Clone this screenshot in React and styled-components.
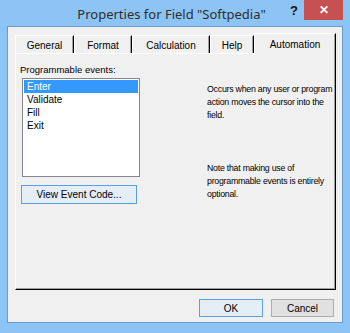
import React from "react";
import styled, { createGlobalStyle } from "styled-components";

const Global = createGlobalStyle`
  html, body { margin: 0; padding: 0; background: #8ec5f6; }
  body { font-family: "Liberation Sans", Arial, sans-serif; }
`;

const Window = styled.div`
  width: 350px;
  height: 333px;
  background: #8dc4f6;
  display: flex;
  flex-direction: column;
  box-sizing: border-box;
`;

const TitleBar = styled.div`
  height: 26px;
  flex: none;
  display: grid;
  grid-template-columns: 1fr auto 1fr;
  align-items: start;
  padding-right: 7px;
`;

const Title = styled.div`
  grid-column: 2;
  font-family: "Noto Sans", "Open Sans", sans-serif;
  font-size: 13px;
  color: #2e2e2e;
  line-height: 28px;
  white-space: nowrap;
`;

const Caption = styled.div`
  grid-column: 3;
  justify-self: end;
  display: flex;
  align-items: flex-start;
`;

const CapButton = styled.div`
  width: ${p => p.$w}px;
  height: 20px;
  display: flex;
  align-items: center;
  justify-content: center;
  background: ${p => (p.$close ? "#c75050" : "transparent")};
  color: ${p => (p.$close ? "#fff" : "#111")};
  font-family: "Liberation Sans", Arial, sans-serif;
  font-weight: bold;
  font-size: ${p => (p.$close ? "12px" : "13px")};
`;

const Client = styled.div`
  flex: 1;
  margin: 0 7px 10px 7px;
  background: #f0f0f0;
  border: 1px solid #6b9cc9;
  padding: 6px 6px 0 7px;
  display: flex;
  flex-direction: column;
  font-size: 9.5px;
  color: #000;
`;

const TabRow = styled.div`
  display: flex;
  align-items: flex-end;
  height: 20px;
  position: relative;
  z-index: 1;
`;

const Tab = styled.div`
  box-sizing: border-box;
  width: ${p => p.$w}px;
  height: ${p => (p.$active ? 21 : 18)}px;
  margin-bottom: ${p => (p.$active ? -1 : 0)}px;
  background: #f0f0f0;
  border-top: 1px solid #fff;
  border-left: 1px solid #fff;
  border-right: 1px solid #000;
  box-shadow: inset -1px 0 0 #a0a0a0;
  display: flex;
  align-items: center;
  justify-content: center;
  font-size: 10px;
  padding-top: ${p => (p.$active ? 0 : 1)}px;
`;

const Panel = styled.div`
  box-sizing: border-box;
  width: 321px;
  height: 237px;
  border-top: 1px solid #fff;
  border-left: 1px solid #fff;
  border-right: 1px solid #000;
  border-bottom: 1px solid #000;
  box-shadow: inset -1px -1px 0 #a0a0a0;
  padding: 9px 4px 0 4px;
  display: flex;
  align-items: flex-start;
`;

const LeftCol = styled.div`
  flex: none;
  width: 187px;
  display: flex;
  flex-direction: column;
  align-items: flex-start;
`;

const Label = styled.div`
  height: 12px;
  line-height: 12px;
  margin-top: 1px;
  white-space: nowrap;
`;

const ListBox = styled.div`
  box-sizing: border-box;
  width: 118px;
  height: 99px;
  margin: 2px 0 0 2px;
  background: #fff;
  border: 1px solid #828790;
  padding: 1px;
`;

const Item = styled.div`
  height: 13px;
  line-height: 13px;
  padding-left: 3px;
  font-size: 10px;
  background: ${p => (p.$sel ? "#3399ff" : "transparent")};
  color: ${p => (p.$sel ? "#fff" : "#000")};
`;

const Button = styled.div`
  box-sizing: border-box;
  width: ${p => p.$w}px;
  height: ${p => p.$h}px;
  margin-left: ${p => p.$ml || 0}px;
  margin-top: ${p => p.$mt || 0}px;
  border: 1px solid ${p => (p.$focus ? "#57a0e6" : "#adadad")};
  background: ${p => (p.$focus ? "#e5eef7" : "#e1e1e1")};
  display: flex;
  align-items: center;
  justify-content: center;
  font-size: 10px;
  color: #000;
`;

const RightCol = styled.div`
  flex: 1;
  min-width: 0;
  display: flex;
  flex-direction: column;
`;

const Para = styled.div`
  line-height: 13px;
  font-size: 8.8px;
  letter-spacing: -0.25px;
  white-space: nowrap;
  margin-top: ${p => p.$mt}px;
`;

const ButtonRow = styled.div`
  display: flex;
  justify-content: flex-end;
  gap: 8px;
  padding-right: 2px;
  margin-top: 9px;
`;

export default function App() {
  return (
    <>
      <Global />
      <Window>
        <TitleBar>
          <Title>Properties for Field "Softpedia"</Title>
          <Caption>
            <CapButton $w={20}>?</CapButton>
            <CapButton $w={39} $close>✕</CapButton>
          </Caption>
        </TitleBar>
        <Client>
          <TabRow>
            <Tab $w={59}>General</Tab>
            <Tab $w={58}>Format</Tab>
            <Tab $w={78}>Calculation</Tab>
            <Tab $w={44}>Help</Tab>
            <Tab $w={82} $active>Automation</Tab>
          </TabRow>
          <Panel>
            <LeftCol>
              <Label>Programmable events:</Label>
              <ListBox>
                <Item $sel>Enter</Item>
                <Item>Validate</Item>
                <Item>Fill</Item>
                <Item>Exit</Item>
              </ListBox>
              <Button $w={116} $h={19} $ml={1} $mt={8} $focus>
                View Event Code...
              </Button>
            </LeftCol>
            <RightCol>
              <Para $mt={20}>
                Occurs when any user or program<br />
                action moves the cursor into the<br />
                field.
              </Para>
              <Para $mt={40}>
                Note that making use of<br />
                programmable events is entirely<br />
                optional.
              </Para>
            </RightCol>
          </Panel>
          <ButtonRow>
            <Button $w={64} $h={18} $focus>OK</Button>
            <Button $w={63} $h={18}>Cancel</Button>
          </ButtonRow>
        </Client>
      </Window>
    </>
  );
}
